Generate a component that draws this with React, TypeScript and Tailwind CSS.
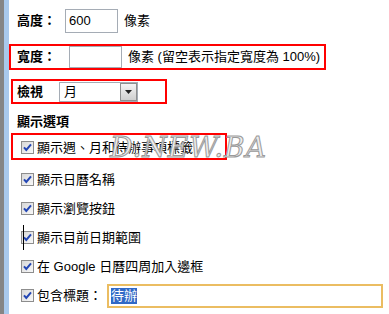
import React from 'react';

const FONT = '"Liberation Sans", "Noto Sans CJK TC", sans-serif';

function Check() {
  return (
    <svg width="13" height="13" viewBox="0 0 13 13" className="shrink-0">
      <defs>
        <linearGradient id="cbg" x1="0" y1="0" x2="1" y2="1">
          <stop offset="0" stopColor="#d6d6d6" />
          <stop offset="1" stopColor="#fafafa" />
        </linearGradient>
      </defs>
      <rect x="0.5" y="0.5" width="12" height="12" fill="url(#cbg)" stroke="#8d8d8d" />
      <path d="M3 6.3 L5.3 9 L10 3.3" fill="none" stroke="#2346b4" strokeWidth="2" />
    </svg>
  );
}

function CheckRow({ children }: { children: React.ReactNode }) {
  return (
    <div className="flex items-center h-[29px] pl-[12px] gap-[3px]">
      <Check />
      <span className="leading-[16px]">{children}</span>
    </div>
  );
}

export default function App() {
  return (
    <div
      className="w-[389px] h-[314px] flex bg-white text-[13px] text-black overflow-hidden"
      style={{ fontFamily: FONT }}
    >
      {/* panel edge */}
      <div className="w-[4px] bg-[#858585]" />
      <div className="w-[5px] bg-[#a9c9ec]" />

      <div className="relative flex-1 flex flex-col">
        {/* 高度 */}
        <div className="flex items-center h-[24px] mt-[9px] pl-[8px]">
          <span className="w-[48px] font-bold">高度：</span>
          <div className="w-[53px] h-[24px] border border-[#a5acb5] flex items-center pl-[3px]">600</div>
          <span className="ml-[6px]">像素</span>
        </div>

        {/* 寬度 */}
        <div className="mt-[11px] w-[317px] h-[26px] border-2 border-[#ff0000] flex items-center pl-[6px]">
          <span className="w-[52px] font-bold">寬度：</span>
          <div className="w-[53px] h-[22px] border border-[#a5acb5]" />
          <span className="ml-[6px] whitespace-nowrap">像素 (留空表示指定寬度為 100%)</span>
        </div>

        {/* 檢視 */}
        <div className="mt-[9px] ml-[2px] w-[156px] h-[25px] border-2 border-[#ff0000] flex items-center pl-[4px]">
          <span className="w-[42px] font-bold">檢視</span>
          <div className="w-[79px] h-[20px] border border-[#a5acb5] flex items-center justify-between">
            <span className="pl-[4px]">月</span>
            <div className="w-[17px] h-[18px] border border-[#8e8f8f] bg-gradient-to-b from-[#f4f4f4] to-[#cfcfcf] flex items-center justify-center">
              <svg width="7" height="4" viewBox="0 0 7 4">
                <path d="M0 0 H7 L3.5 4 Z" fill="#222" />
              </svg>
            </div>
          </div>
        </div>

        {/* 顯示選項 */}
        <div className="mt-[10px] h-[16px] leading-[16px] pl-[8px] font-bold">顯示選項</div>

        <div className="mt-[3px] ml-[2px] w-[216px] h-[27px] border-2 border-[#ff0000] flex items-center pl-[8px] pt-[2px] gap-[3px]">
          <Check />
          <span className="leading-[16px] whitespace-nowrap">顯示週、月和待辦事項標籤</span>
        </div>

        <div className="mt-[5px] flex flex-col">
          <CheckRow>顯示日曆名稱</CheckRow>
          <CheckRow>顯示瀏覽按鈕</CheckRow>
          <CheckRow>顯示目前日期範圍</CheckRow>
          <CheckRow>在 Google 日曆四周加入邊框</CheckRow>
          <div className="flex items-center h-[29px] pl-[12px] gap-[3px]">
            <Check />
            <span className="leading-[16px] w-[67px] whitespace-nowrap">包含標題：</span>
            <div className="w-[276px] h-[24px] border-2 border-[#ebbd62] flex items-center pl-[2px]">
              <span className="bg-[#3169c6] text-white leading-[16px]">待辦</span>
            </div>
          </div>
        </div>

        {/* text cursor */}
        <div className="absolute left-[14px] top-[225px] w-px h-[25px] bg-black" />

        {/* watermark */}
        <div
          className="absolute left-[101px] top-[127px] text-[28px] italic tracking-[1px] text-[#eeeeee] pointer-events-none"
          style={{ fontFamily: '"DejaVu Serif", serif', WebkitTextStroke: '1px #9a9a9a' }}
        >
          D.NEW.BA
        </div>
      </div>
    </div>
  );
}
